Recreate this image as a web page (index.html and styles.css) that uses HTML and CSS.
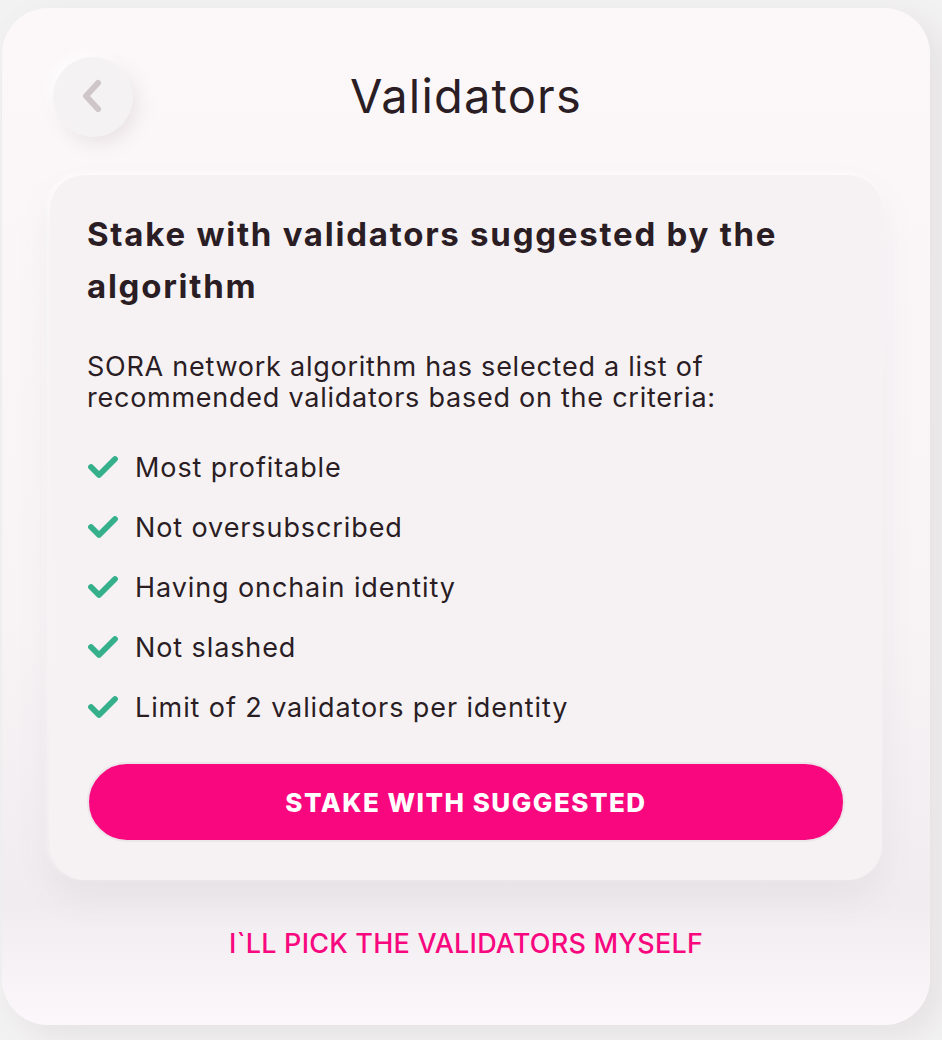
FILE: index.html
```html
<!DOCTYPE html>
<html lang="en">
<head>
<meta charset="utf-8">
<title>Validators</title>
<link rel="stylesheet" href="styles.css">
</head>
<body>
<div class="page">
  <div class="sheet">
    <header class="header">
      <button class="back" aria-label="Back">
        <svg width="30" height="40" viewBox="0 0 30 40"><path d="M20 6 L8 19 L20 32" fill="none" stroke="#cfc6ca" stroke-width="6" stroke-linecap="round" stroke-linejoin="round"/></svg>
      </button>
      <h1 class="title">Validators</h1>
    </header>
    <section class="card">
      <h2 class="heading">Stake with validators suggested by the algorithm</h2>
      <p class="desc">SORA network algorithm has selected a list of recommended validators based on the criteria:</p>
      <ul class="criteria">
        <li><svg class="check" viewBox="0 0 32 24"><path d="M4 12 L12 20 L28 4" fill="none" stroke="#35b08a" stroke-width="5.8" stroke-linecap="round" stroke-linejoin="round"/></svg>Most profitable</li>
        <li><svg class="check" viewBox="0 0 32 24"><path d="M4 12 L12 20 L28 4" fill="none" stroke="#35b08a" stroke-width="5.8" stroke-linecap="round" stroke-linejoin="round"/></svg>Not oversubscribed</li>
        <li><svg class="check" viewBox="0 0 32 24"><path d="M4 12 L12 20 L28 4" fill="none" stroke="#35b08a" stroke-width="5.8" stroke-linecap="round" stroke-linejoin="round"/></svg>Having onchain identity</li>
        <li><svg class="check" viewBox="0 0 32 24"><path d="M4 12 L12 20 L28 4" fill="none" stroke="#35b08a" stroke-width="5.8" stroke-linecap="round" stroke-linejoin="round"/></svg>Not slashed</li>
        <li><svg class="check" viewBox="0 0 32 24"><path d="M4 12 L12 20 L28 4" fill="none" stroke="#35b08a" stroke-width="5.8" stroke-linecap="round" stroke-linejoin="round"/></svg>Limit of 2 validators per identity</li>
      </ul>
      <button class="primary">STAKE WITH SUGGESTED</button>
    </section>
    <a class="link" href="#">I`LL PICK THE VALIDATORS MYSELF</a>
  </div>
</div>
</body>
</html>
```
FILE: styles.css
```css
* { box-sizing: border-box; }
html, body { margin: 0; padding: 0; }
body {
  background: #f3f2f2;
  font-family: "Inter", "Noto Sans", sans-serif;
  color: #2b1d24;
}
.page {
  width: 942px;
  height: 1040px;
  padding: 8px 0 0 2px;
  overflow: hidden;
}
.sheet {
  width: 928px;
  height: 1017px;
  border-radius: 46px;
  background: linear-gradient(180deg, #fcf8fa 0%, #f8f4f6 60%, #f0ecef 88%, #fcf7fa 100%);
  box-shadow: 12px 10px 30px rgba(120, 110, 115, 0.12);
  display: flex;
  flex-direction: column;
  align-items: center;
}
.header {
  width: 100%;
  height: 129px;
  padding-top: 49px;
  position: relative;
  display: flex;
  justify-content: center;
}
.back {
  position: absolute;
  left: 51px;
  top: 49px;
  width: 80px;
  height: 80px;
  border-radius: 50%;
  border: none;
  background: #f5f2f3;
  box-shadow: 6px 8px 18px rgba(140, 120, 130, 0.14), -4px -4px 10px rgba(255, 255, 255, 0.8);
  display: flex;
  align-items: center;
  justify-content: center;
  padding: 0;
}
.title {
  margin: 0;
  margin-top: -1px;
  font-weight: 400;
  font-size: 47px;
  line-height: 80px;
  letter-spacing: 1.2px;
  color: #2b1d24;
}
.card {
  margin-top: 38px;
  width: 832px;
  height: 705px;
  border-radius: 34px;
  background: #f6f2f4;
  box-shadow: 0 18px 36px rgba(120, 100, 110, 0.08), -2px -2px 6px rgba(255,255,255,0.7);
  padding: 33px 37px 0 37px;
}
.heading {
  margin: 0;
  font-size: 33px;
  line-height: 52px;
  font-weight: 700;
  letter-spacing: 1.75px;
  color: #2b1d24;
}
.desc {
  margin: 39px 0 0;
  font-size: 27px;
  line-height: 31px;
  font-weight: 400;
  letter-spacing: 0.75px;
  max-width: 640px;
}
.criteria {
  list-style: none;
  margin: 24px 0 0;
  padding: 0;
}
.criteria li {
  display: flex;
  align-items: center;
  height: 60px;
  font-size: 27px;
  letter-spacing: 0.9px;
}
.check {
  width: 32px;
  height: 24px;
  margin-right: 16px;
  flex: none;
}
.primary {
  margin-top: 25px;
  width: 758px;
  height: 80px;
  border-radius: 40px;
  border: 2px solid #ece5e9;
  background: #f8077f;
  color: #fff;
  font-family: "Inter", sans-serif;
  font-weight: 800;
  font-size: 26px;
  letter-spacing: 1.5px;
  display: block;
}
.link {
  margin-top: 44px;
  color: #f8077f;
  text-decoration: none;
  font-size: 27px;
  font-weight: 500;
  letter-spacing: 0.2px;
  line-height: 40px;
}
```
